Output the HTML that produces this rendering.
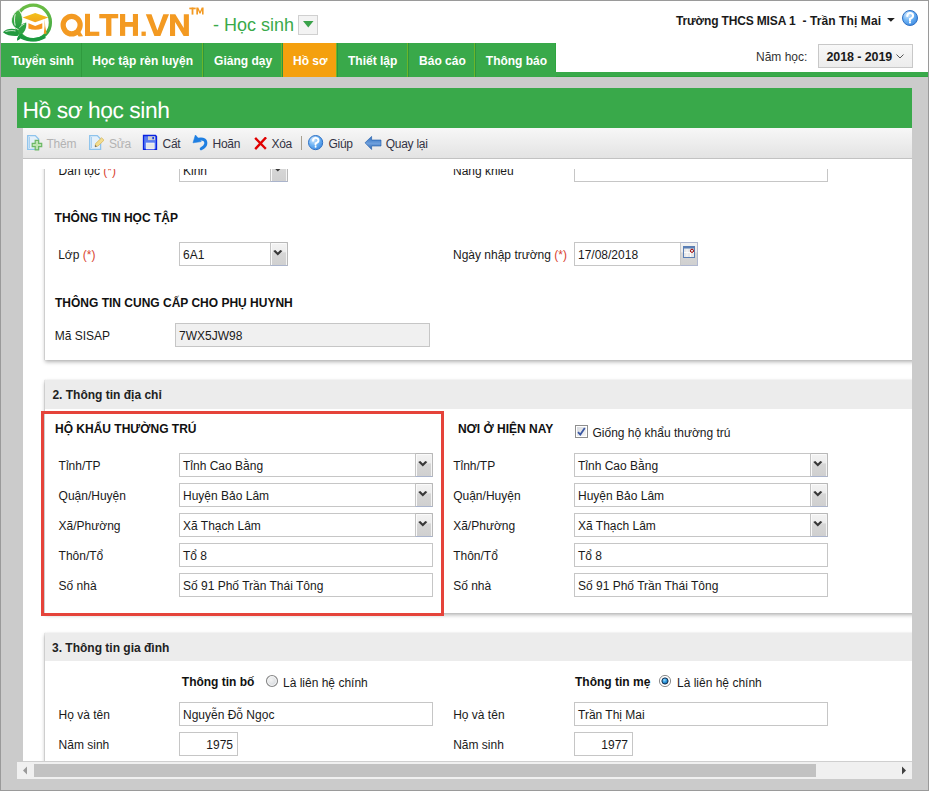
<!DOCTYPE html><html><head><meta charset="utf-8"><style>
html,body{margin:0;padding:0;width:929px;height:791px;overflow:hidden;background:#cbcbcb;}
body{position:relative;font-family:"Liberation Sans", sans-serif;}
.t{position:absolute;white-space:nowrap;line-height:1;}
svg{position:absolute;}
</style></head><body>
<div style="position:absolute;left:0px;top:0px;width:929px;height:791px;box-sizing:border-box;border:1px solid #9a9a9a;background:#cbcbcb"></div>
<div style="position:absolute;left:1px;top:1px;width:927px;height:42px;background:#fff"></div>
<div style="position:absolute;left:1px;top:43px;width:555px;height:34px;background:#39a94a"></div>
<div style="position:absolute;left:556px;top:43px;width:372px;height:29px;background:#fff"></div>
<div style="position:absolute;left:556px;top:72px;width:372px;height:5px;background:#39a94a"></div>
<div style="position:absolute;left:283px;top:43px;width:53px;height:34px;background:#f4a00e"></div>
<div style="position:absolute;left:81px;top:43px;width:1px;height:34px;background:#2f9a3e"></div>
<div style="position:absolute;left:202px;top:43px;width:1px;height:34px;background:#6cb52a"></div>
<div style="position:absolute;left:203px;top:43px;width:1px;height:34px;background:#2e9640"></div>
<div style="position:absolute;left:281px;top:43px;width:1px;height:34px;background:#6cb52a"></div>
<div style="position:absolute;left:282px;top:43px;width:1px;height:34px;background:#2e9640"></div>
<div style="position:absolute;left:336px;top:43px;width:1px;height:34px;background:#6cb52a"></div>
<div style="position:absolute;left:337px;top:43px;width:1px;height:34px;background:#2e9640"></div>
<div style="position:absolute;left:407px;top:43px;width:1px;height:34px;background:#6cb52a"></div>
<div style="position:absolute;left:408px;top:43px;width:1px;height:34px;background:#2e9640"></div>
<div style="position:absolute;left:474px;top:43px;width:1px;height:34px;background:#6cb52a"></div>
<div style="position:absolute;left:475px;top:43px;width:1px;height:34px;background:#2e9640"></div>
<div style="position:absolute;left:555px;top:43px;width:1px;height:29px;background:#2ea63f"></div>
<div style="position:absolute;left:556px;top:76px;width:372px;height:1px;background:#2fa33f"></div>
<div class="t" style="left:11.4px;top:54.64px;font-size:12px;font-weight:bold;color:#ffffff;">Tuyển sinh</div>
<div class="t" style="left:92.3px;top:54.64px;font-size:12px;font-weight:bold;color:#ffffff;">Học tập rèn luyện</div>
<div class="t" style="left:214.1px;top:54.64px;font-size:12px;font-weight:bold;color:#ffffff;">Giảng dạy</div>
<div class="t" style="left:293px;top:54.64px;font-size:12px;font-weight:bold;color:#ffffff;">Hồ sơ</div>
<div class="t" style="left:348px;top:54.64px;font-size:12px;font-weight:bold;color:#ffffff;">Thiết lập</div>
<div class="t" style="left:419.1px;top:54.64px;font-size:12px;font-weight:bold;color:#ffffff;">Báo cáo</div>
<div class="t" style="left:485.8px;top:54.64px;font-size:12px;font-weight:bold;color:#ffffff;">Thông báo</div>
<svg style="left:2px;top:2px" width="52" height="41" viewBox="2 2 52 41">
<defs>
<linearGradient id="capg" x1="0" y1="0" x2="0" y2="1"><stop offset="0" stop-color="#f2c21a"/><stop offset="1" stop-color="#f3a51c"/></linearGradient>
<linearGradient id="leafg" x1="0" y1="0" x2="0" y2="1"><stop offset="0" stop-color="#52b447"/><stop offset="1" stop-color="#1f9a40"/></linearGradient>
<linearGradient id="ringg" x1="0" y1="0" x2="0" y2="1"><stop offset="0" stop-color="#6cbd45"/><stop offset="0.6" stop-color="#4cae45"/><stop offset="1" stop-color="#22a040"/></linearGradient>
</defs>
<circle cx="33.2" cy="22.4" r="17.2" fill="none" stroke="url(#ringg)" stroke-width="3.3"/>
<path d="M22.6 17.4 L35.2 12.9 L48.4 17.4 L35.2 22.3 Z" fill="url(#capg)"/>
<path d="M28.4 23.3 L35.2 26 L42.3 23.3 L42.3 28.5 Q35.2 31 28.4 28.5 Z" fill="#f6961d"/>
<path d="M44.6 18.5 L45.2 26 L46.6 33.8 L43.8 33.8 L44.6 26 Z" fill="#f39a1e"/>
<path d="M18.6 29.5 C10.5 27 8 17 18.3 9.6 C23.8 15 24 24 18.6 29.5 Z" fill="url(#leafg)" stroke="#fff" stroke-width="0.8"/>
<path d="M15.2 14.2 C14.3 18 14.3 22 15.2 25.6" fill="none" stroke="#f4fbf0" stroke-width="0.9"/>
<path d="M18.3 28.8 C19.5 25.5 22 23.5 26.2 22.6 C26.8 27.5 25 32 21.8 34.2 C20 33 18.8 31 18.3 28.8 Z" fill="#2ea244"/>
<path d="M19.5 27.8 C21 25.8 22.8 24.6 24.5 24" fill="none" stroke="#f4fbf0" stroke-width="0.8"/>
<path d="M2.9 32.2 C6 29 11.5 28 16.5 29.5 C18.5 31 19.5 33.5 18.5 35.8 C13 36.5 7 35.5 2.9 32.2 Z" fill="#22993f"/>
<path d="M5.5 31.5 C9 30.5 13 30.3 15.5 31" fill="none" stroke="#f4fbf0" stroke-width="0.8"/>
<path d="M17 40.8 C16.8 37 18.5 34.8 22 34 C21.8 37.5 20.2 39.8 17 40.8 Z" fill="#15953d"/>
<path d="M19.5 35.5 C25 40.5 36 41.8 45 36.5" fill="none" stroke="#1c9a40" stroke-width="3.4"/>
</svg>
<svg style="left:58px;top:10px" width="134" height="30" viewBox="58 10 134 30"><g fill="#f39a22">
<ellipse cx="71.65" cy="25.1" rx="8.5" ry="8.8" fill="none" stroke="#f39a22" stroke-width="5.2"/>
<path d="M74.5 30.5 L78.5 29 L83 36.3 L78.6 36.6 Z"/>
<rect x="85" y="13.8" width="5" height="22.1"/><rect x="85" y="31.7" width="14.3" height="4.2"/>
<rect x="99.3" y="14" width="18.9" height="4.3"/><rect x="106.1" y="14" width="5.3" height="21.9"/>
<rect x="120" y="14" width="5.2" height="21.9"/><rect x="132.9" y="14" width="5.1" height="21.9"/><rect x="120" y="22" width="18" height="4.8"/>
<rect x="141.5" y="31.6" width="4.3" height="4.3"/>
<path d="M145.8 14.2 L151.5 14.2 L157.4 30.6 L163.3 14.2 L169 14.2 L160.4 35.9 L154.4 35.9 Z"/>
<path d="M170 14.2 L175.3 14.2 L183.8 28 L183.8 14.2 L188.9 14.2 L188.9 35.9 L183.6 35.9 L175.1 22 L175.1 35.9 L170 35.9 Z"/>
</g></svg>
<svg style="left:188px;top:6px" width="17" height="10" viewBox="188 6 17 10"><g fill="#f39a22">
<rect x="189.3" y="7.6" width="6.4" height="1.7"/><rect x="191.6" y="7.6" width="1.8" height="7"/>
<path d="M196.3 7.6 H198.3 L200 11.6 L201.7 7.6 H203.6 V14.6 H202 V10.2 L200.6 13.6 H199.4 L198 10.2 V14.6 H196.3 Z"/>
</g></svg>
<div class="t" style="left:213px;top:16.36px;font-size:18px;font-weight:normal;color:#3aaa4a;">- Học sinh</div>
<div style="position:absolute;left:298px;top:15px;width:18px;height:18px;border:1px solid #d0d0d0;background:#f3f3f3"></div>
<svg style="left:303px;top:20.5px" width="11" height="7" viewBox="0 0 11 7"><path d="M0 0 H10.5 L5.25 6.5 Z" fill="#3aa24a"/></svg>
<div class="t" style="left:676px;top:14.74px;font-size:12px;font-weight:bold;color:#1a1a1a;letter-spacing:-0.15px;">Trường THCS MISA 1</div>
<div class="t" style="left:802.4px;top:14.74px;font-size:12px;font-weight:bold;color:#1a1a1a;letter-spacing:0.1px;">- Trần Thị Mai</div>
<svg style="left:887px;top:17.8px" width="8" height="5" viewBox="0 0 8 5"><path d="M0 0 H7.8 L3.9 3.8 Z" fill="#202020"/></svg>
<svg style="left:901px;top:9px" width="18" height="18" viewBox="-9 -9 18 18">
<defs><radialGradient id="hg910" cx="0.35" cy="0.3" r="0.8"><stop offset="0" stop-color="#d4eaff"/><stop offset="0.5" stop-color="#6cb2f4"/><stop offset="1" stop-color="#3a86de"/></radialGradient></defs>
<circle cx="0" cy="0" r="7.5" fill="url(#hg910)" stroke="#2f70c4" stroke-width="1"/>
<path d="M-2.72 -2.0 Q-2.4 -4.96 0 -4.96 Q3.04 -4.96 3.04 -2.24 Q3.04 -0.4 0 0.96 L0 2.4" fill="none" stroke="#fff" stroke-width="2.08" stroke-linecap="round"/>
<circle cx="0" cy="4.4" r="1.04" fill="#fff"/>
</svg>
<div class="t" style="left:756px;top:50.84px;font-size:12px;font-weight:normal;color:#333333;">Năm học:</div>
<div style="position:absolute;left:818px;top:44px;width:93px;height:22px;border:1px solid #c8c8c8;background:linear-gradient(#f8f8f8,#ececec)"></div>
<div class="t" style="left:826.5px;top:51.42px;font-size:12.5px;font-weight:bold;color:#1a1a1a;letter-spacing:-0.1px;">2018 - 2019</div>
<svg style="left:896px;top:54px" width="8" height="5" viewBox="0 0 8 5"><path d="M0.5 0.5 L4 4 L7.5 0.5" fill="none" stroke="#555" stroke-width="1"/></svg>
<div style="position:absolute;left:17px;top:88px;width:895px;height:40px;background:#39a94a"></div>
<div class="t" style="left:22.6px;top:99.10px;font-size:22.8px;font-weight:normal;color:#ffffff;letter-spacing:-0.45px;text-rendering:geometricPrecision;">Hồ sơ học sinh</div>
<div style="position:absolute;left:23px;top:128px;width:889px;height:30px;background:linear-gradient(#f7f7f7,#e3e3e3)"></div>
<div style="position:absolute;left:23px;top:158px;width:889px;height:1px;background:#c2c2c2"></div>
<svg style="left:26px;top:134px" width="17" height="17" viewBox="26 134 17 17">
<path d="M27.7 135.6 H35.3 L38.6 139 V149.3 H27.7 Z" fill="#e4f0fa" stroke="#8ec3ec" stroke-width="1.3"/>
<path d="M29.5 137 V148" stroke="#a8d0f0" stroke-width="1"/>
<path d="M35.2 140.3 H38.6 V143.4 H41.7 V146.7 H38.6 V149.8 H35.2 V146.7 H32.2 V143.4 H35.2 Z" fill="#bfe3b3" stroke="#6cb865" stroke-width="1.2"/>
</svg>
<div class="t" style="left:46.5px;top:138.14px;font-size:12px;font-weight:normal;color:#b3b3b3;letter-spacing:-0.25px;">Thêm</div>
<svg style="left:88px;top:134px" width="17" height="17" viewBox="88 134 17 17">
<path d="M89.7 135.6 H97.3 L100.6 139 V149.3 H89.7 Z" fill="#e4f0fa" stroke="#8ec3ec" stroke-width="1.3"/>
<path d="M91.5 137 V148" stroke="#a8d0f0" stroke-width="1"/>
<path d="M95 146.8 L95.6 143.6 L101.6 137.8 L104 140.2 L98 146 Z" fill="#f2dc8e" stroke="#d9b95e" stroke-width="0.8"/>
<path d="M95 146.8 L95.4 145 L96.8 146.4 Z" fill="#404060"/>
</svg>
<div class="t" style="left:109px;top:138.14px;font-size:12px;font-weight:normal;color:#b3b3b3;letter-spacing:-0.25px;">Sửa</div>
<svg style="left:142px;top:134px" width="17" height="17" viewBox="142 134 17 17">
<path d="M143.5 135.5 H155.5 L156.5 136.5 V149.3 H143.5 Z" fill="#5a7cf0" stroke="#0a22e0" stroke-width="1.3"/>
<rect x="148" y="136.3" width="7" height="3.8" fill="#cfcfcf"/>
<rect x="152.3" y="137" width="1.7" height="2.2" fill="#2040e0"/>
<rect x="146.2" y="143" width="8" height="6" fill="#e6e6e6" stroke="#fff" stroke-width="0.6"/>
</svg>
<div class="t" style="left:162.5px;top:138.14px;font-size:12px;font-weight:normal;color:#333344;letter-spacing:-0.25px;">Cất</div>
<svg style="left:191px;top:134px" width="18" height="17" viewBox="191 134 18 17">
<path d="M198.5 139.2 C203.5 138 206.2 140.5 205.8 143.8 C205.5 146 203.5 147.5 201.2 148.8" fill="none" stroke="#1f7fe2" stroke-width="3" stroke-linecap="round"/>
<path d="M195.4 135 L193 142.8 L201.2 141.6 Z" fill="#1f7fe2" stroke="#1f7fe2" stroke-width="0.6" stroke-linejoin="round"/>
</svg>
<div class="t" style="left:212.5px;top:138.14px;font-size:12px;font-weight:normal;color:#333344;letter-spacing:-0.25px;">Hoãn</div>
<svg style="left:254px;top:137px" width="13" height="13" viewBox="254 137 13 13">
<path d="M256 138.8 L265 148 M265.3 138.2 L256 148.2" stroke="#e00000" stroke-width="2.4" stroke-linecap="square"/>
</svg>
<div class="t" style="left:271.4px;top:138.14px;font-size:12px;font-weight:normal;color:#333344;letter-spacing:-0.25px;">Xóa</div>
<div style="position:absolute;left:301px;top:136px;width:1px;height:14px;background:#a8a090"></div>
<svg style="left:306.9px;top:133.8px" width="17.2" height="17.2" viewBox="-8.6 -8.6 17.2 17.2">
<defs><radialGradient id="hg315" cx="0.35" cy="0.3" r="0.8"><stop offset="0" stop-color="#d4eaff"/><stop offset="0.5" stop-color="#6cb2f4"/><stop offset="1" stop-color="#3a86de"/></radialGradient></defs>
<circle cx="0" cy="0" r="7.1" fill="url(#hg315)" stroke="#2f70c4" stroke-width="1"/>
<path d="M-2.584 -1.9 Q-2.28 -4.712 0 -4.712 Q2.888 -4.712 2.888 -2.128 Q2.888 -0.38 0 0.9119999999999999 L0 2.28" fill="none" stroke="#fff" stroke-width="1.976" stroke-linecap="round"/>
<circle cx="0" cy="4.18" r="0.988" fill="#fff"/>
</svg>
<div class="t" style="left:328.4px;top:138.14px;font-size:12px;font-weight:normal;color:#333344;letter-spacing:-0.25px;">Giúp</div>
<svg style="left:364px;top:136px" width="18" height="14" viewBox="364 136 18 14">
<defs><linearGradient id="arg" x1="0" y1="0" x2="0" y2="1"><stop offset="0" stop-color="#2a6cc0"/><stop offset="0.55" stop-color="#6fa0dc"/><stop offset="1" stop-color="#2a64b0"/></linearGradient></defs>
<path d="M365 142.8 L371.6 136.4 V140 H381 V146 H371.6 V149.5 Z" fill="url(#arg)" stroke="#1f5aa8" stroke-width="0.6"/>
</svg>
<div class="t" style="left:385.7px;top:138.14px;font-size:12px;font-weight:normal;color:#333344;letter-spacing:-0.25px;">Quay lại</div>
<div style="position:absolute;left:23px;top:159px;width:889px;height:602px;background:#fff"></div>
<div style="position:absolute;left:23px;top:169px;width:889px;height:592px;overflow:hidden">
<div style="position:absolute;left:22px;top:-69px;width:900px;height:260px;background:#fff;box-shadow:-1.5px 0 1px rgba(0,0,0,0.16), 0 2px 4px rgba(0,0,0,0.3)"></div>
<div class="t" style="left:35.6px;top:-4.16px;font-size:12px;font-weight:normal;color:#1a1a1a;">Dân tộc <span style="color:#d9432f">(*)</span></div>
<div style="position:absolute;left:156px;top:-11px;width:107px;height:22px;border:1px solid #c6c6c6;background:#fff"></div>
<div style="position:absolute;left:247px;top:-11px;width:16px;height:22px;border:1px solid #b8b8b8;border-left-color:#c4c4c4;border-bottom-color:#aab4cc;border-top-right-radius:2px;background:linear-gradient(#f3f3f3 0,#ececec 40%,#d6d6d6 45%,#d0d0d0 100%);box-shadow:inset 1px 1px 0 #fafafa, inset -1px 0 0 #f4f4f4"></div>
<svg style="position:absolute;left:249.8px;top:-3.4px" width="11" height="8" viewBox="0 0 11 8"><path d="M0.2 1.0 L4.8 5.5 L9.4 1.0 L7.3 0.1 L4.8 2.6 L2.3 0.1 Z" fill="#383838"/></svg>
<div class="t" style="left:160px;top:-4.16px;font-size:12px;font-weight:normal;color:#1a1a1a;">Kinh</div>
<div class="t" style="left:430px;top:-4.16px;font-size:12px;font-weight:normal;color:#1a1a1a;">Năng khiếu</div>
<div style="position:absolute;left:551px;top:-11px;width:252px;height:22px;border:1px solid #c6c6c6;background:#fff"></div>
<div class="t" style="left:31.6px;top:43.24px;font-size:12px;font-weight:bold;color:#111;">THÔNG TIN HỌC TẬP</div>
<div class="t" style="left:35.2px;top:80.44px;font-size:12px;font-weight:normal;color:#1a1a1a;">Lớp <span style="color:#d9432f">(*)</span></div>
<div style="position:absolute;left:156px;top:73px;width:107px;height:22px;border:1px solid #c6c6c6;background:#fff"></div>
<div style="position:absolute;left:247px;top:73px;width:16px;height:22px;border:1px solid #b8b8b8;border-left-color:#c4c4c4;border-bottom-color:#aab4cc;border-top-right-radius:2px;background:linear-gradient(#f3f3f3 0,#ececec 40%,#d6d6d6 45%,#d0d0d0 100%);box-shadow:inset 1px 1px 0 #fafafa, inset -1px 0 0 #f4f4f4"></div>
<svg style="position:absolute;left:249.8px;top:80.6px" width="11" height="8" viewBox="0 0 11 8"><path d="M0.2 1.0 L4.8 5.5 L9.4 1.0 L7.3 0.1 L4.8 2.6 L2.3 0.1 Z" fill="#383838"/></svg>
<div class="t" style="left:160px;top:79.84px;font-size:12px;font-weight:normal;color:#1a1a1a;">6A1</div>
<div class="t" style="left:430px;top:80.44px;font-size:12px;font-weight:normal;color:#1a1a1a;">Ngày nhập trường <span style="color:#d9432f">(*)</span></div>
<div style="position:absolute;left:551px;top:73px;width:122px;height:22px;border:1px solid #c6c6c6;background:#fff"></div>
<div class="t" style="left:555px;top:79.84px;font-size:12px;font-weight:normal;color:#1a1a1a;">17/08/2018</div>
<div style="position:absolute;left:657px;top:73px;width:16px;height:22px;border:1px solid #b0b8d0;border-left-color:#c8c8c8;background:linear-gradient(#f3f3f3 0,#ececec 40%,#d6d6d6 45%,#d0d0d0 100%)"></div>
<svg style="left:660px;top:77px" width="12" height="12" viewBox="0 0 12 12">
<rect x="0.5" y="0.5" width="11" height="11" fill="#e8e8e8" stroke="#5b7fb5" stroke-width="1"/>
<rect x="0.5" y="0.5" width="11" height="2" fill="#5b7fb5"/>
<path d="M4 3 V11 M7.5 3 V11 M1 6.5 H11" stroke="#fff" stroke-width="0.8"/>
<circle cx="9" cy="4.8" r="1.6" fill="none" stroke="#a00000" stroke-width="1"/>
</svg>
<div class="t" style="left:32px;top:128.24px;font-size:12px;font-weight:bold;color:#111;">THÔNG TIN CUNG CẤP CHO PHỤ HUYNH</div>
<div class="t" style="left:31.700000000000003px;top:160.54px;font-size:12px;font-weight:normal;color:#1a1a1a;">Mã SISAP</div>
<div style="position:absolute;left:152px;top:154px;width:253px;height:22px;border:1px solid #c6c6c6;background:#f0f0f0"></div>
<div class="t" style="left:156px;top:160.84px;font-size:12px;font-weight:normal;color:#1a1a1a;">7WX5JW98</div>
<div style="position:absolute;left:22px;top:211px;width:900px;height:233px;background:#fff;box-shadow:-1.5px 0 1px rgba(0,0,0,0.16), 0 2px 4px rgba(0,0,0,0.3)"></div>
<div style="position:absolute;left:22px;top:211px;width:900px;height:29px;background:#ececec"></div>
<div class="t" style="left:29.4px;top:219.84px;font-size:12px;font-weight:bold;color:#222;">2. Thông tin địa chỉ</div>
<div style="position:absolute;left:18px;top:242px;width:397px;height:199px;border:3px solid #e5433a"></div>
<div class="t" style="left:32px;top:253.74px;font-size:12px;font-weight:bold;color:#111;">HỘ KHẨU THƯỜNG TRÚ</div>
<div class="t" style="left:434.9px;top:253.84px;font-size:12px;font-weight:bold;color:#111;">NƠI Ở HIỆN NAY</div>
<svg style="left:552px;top:256px" width="13" height="13" viewBox="0 0 13 13">
<defs><linearGradient id="cbg" x1="0" y1="0" x2="1" y2="1"><stop offset="0" stop-color="#d8dbe0"/><stop offset="1" stop-color="#f6f6f6"/></linearGradient></defs>
<rect x="0.5" y="0.5" width="12" height="12" fill="#fff" stroke="#8e8e8e"/>
<rect x="2" y="2" width="9" height="9" fill="url(#cbg)"/>
<path d="M3 7.2 L5.3 9.6 L9.8 3" fill="none" stroke="#3b58a3" stroke-width="1.8"/>
</svg>
<div class="t" style="left:569.5px;top:257.64px;font-size:12px;font-weight:normal;color:#1a1a1a;">Giống hộ khẩu thường trú</div>
<div class="t" style="left:35.6px;top:291.04px;font-size:12px;font-weight:normal;color:#1a1a1a;">Tỉnh/TP</div>
<div style="position:absolute;left:156px;top:284px;width:252px;height:22px;border:1px solid #c6c6c6;background:#fff"></div>
<div style="position:absolute;left:392px;top:284px;width:16px;height:22px;border:1px solid #b8b8b8;border-left-color:#c4c4c4;border-bottom-color:#aab4cc;border-top-right-radius:2px;background:linear-gradient(#f3f3f3 0,#ececec 40%,#d6d6d6 45%,#d0d0d0 100%);box-shadow:inset 1px 1px 0 #fafafa, inset -1px 0 0 #f4f4f4"></div>
<svg style="position:absolute;left:394.8px;top:291.6px" width="11" height="8" viewBox="0 0 11 8"><path d="M0.2 1.0 L4.8 5.5 L9.4 1.0 L7.3 0.1 L4.8 2.6 L2.3 0.1 Z" fill="#383838"/></svg>
<div class="t" style="left:160px;top:290.84px;font-size:12px;font-weight:normal;color:#1a1a1a;">Tỉnh Cao Bằng</div>
<div class="t" style="left:430.2px;top:291.04px;font-size:12px;font-weight:normal;color:#1a1a1a;">Tỉnh/TP</div>
<div style="position:absolute;left:551px;top:284px;width:252px;height:22px;border:1px solid #c6c6c6;background:#fff"></div>
<div style="position:absolute;left:787px;top:284px;width:16px;height:22px;border:1px solid #b8b8b8;border-left-color:#c4c4c4;border-bottom-color:#aab4cc;border-top-right-radius:2px;background:linear-gradient(#f3f3f3 0,#ececec 40%,#d6d6d6 45%,#d0d0d0 100%);box-shadow:inset 1px 1px 0 #fafafa, inset -1px 0 0 #f4f4f4"></div>
<svg style="position:absolute;left:789.8px;top:291.6px" width="11" height="8" viewBox="0 0 11 8"><path d="M0.2 1.0 L4.8 5.5 L9.4 1.0 L7.3 0.1 L4.8 2.6 L2.3 0.1 Z" fill="#383838"/></svg>
<div class="t" style="left:555px;top:290.84px;font-size:12px;font-weight:normal;color:#1a1a1a;">Tỉnh Cao Bằng</div>
<div class="t" style="left:35.6px;top:321.04px;font-size:12px;font-weight:normal;color:#1a1a1a;">Quận/Huyện</div>
<div style="position:absolute;left:156px;top:314px;width:252px;height:22px;border:1px solid #c6c6c6;background:#fff"></div>
<div style="position:absolute;left:392px;top:314px;width:16px;height:22px;border:1px solid #b8b8b8;border-left-color:#c4c4c4;border-bottom-color:#aab4cc;border-top-right-radius:2px;background:linear-gradient(#f3f3f3 0,#ececec 40%,#d6d6d6 45%,#d0d0d0 100%);box-shadow:inset 1px 1px 0 #fafafa, inset -1px 0 0 #f4f4f4"></div>
<svg style="position:absolute;left:394.8px;top:321.6px" width="11" height="8" viewBox="0 0 11 8"><path d="M0.2 1.0 L4.8 5.5 L9.4 1.0 L7.3 0.1 L4.8 2.6 L2.3 0.1 Z" fill="#383838"/></svg>
<div class="t" style="left:160px;top:320.84px;font-size:12px;font-weight:normal;color:#1a1a1a;">Huyện Bảo Lâm</div>
<div class="t" style="left:430.2px;top:321.04px;font-size:12px;font-weight:normal;color:#1a1a1a;">Quận/Huyện</div>
<div style="position:absolute;left:551px;top:314px;width:252px;height:22px;border:1px solid #c6c6c6;background:#fff"></div>
<div style="position:absolute;left:787px;top:314px;width:16px;height:22px;border:1px solid #b8b8b8;border-left-color:#c4c4c4;border-bottom-color:#aab4cc;border-top-right-radius:2px;background:linear-gradient(#f3f3f3 0,#ececec 40%,#d6d6d6 45%,#d0d0d0 100%);box-shadow:inset 1px 1px 0 #fafafa, inset -1px 0 0 #f4f4f4"></div>
<svg style="position:absolute;left:789.8px;top:321.6px" width="11" height="8" viewBox="0 0 11 8"><path d="M0.2 1.0 L4.8 5.5 L9.4 1.0 L7.3 0.1 L4.8 2.6 L2.3 0.1 Z" fill="#383838"/></svg>
<div class="t" style="left:555px;top:320.84px;font-size:12px;font-weight:normal;color:#1a1a1a;">Huyện Bảo Lâm</div>
<div class="t" style="left:35.6px;top:351.04px;font-size:12px;font-weight:normal;color:#1a1a1a;">Xã/Phường</div>
<div style="position:absolute;left:156px;top:344px;width:252px;height:22px;border:1px solid #c6c6c6;background:#fff"></div>
<div style="position:absolute;left:392px;top:344px;width:16px;height:22px;border:1px solid #b8b8b8;border-left-color:#c4c4c4;border-bottom-color:#aab4cc;border-top-right-radius:2px;background:linear-gradient(#f3f3f3 0,#ececec 40%,#d6d6d6 45%,#d0d0d0 100%);box-shadow:inset 1px 1px 0 #fafafa, inset -1px 0 0 #f4f4f4"></div>
<svg style="position:absolute;left:394.8px;top:351.6px" width="11" height="8" viewBox="0 0 11 8"><path d="M0.2 1.0 L4.8 5.5 L9.4 1.0 L7.3 0.1 L4.8 2.6 L2.3 0.1 Z" fill="#383838"/></svg>
<div class="t" style="left:160px;top:350.84px;font-size:12px;font-weight:normal;color:#1a1a1a;">Xã Thạch Lâm</div>
<div class="t" style="left:430.2px;top:351.04px;font-size:12px;font-weight:normal;color:#1a1a1a;">Xã/Phường</div>
<div style="position:absolute;left:551px;top:344px;width:252px;height:22px;border:1px solid #c6c6c6;background:#fff"></div>
<div style="position:absolute;left:787px;top:344px;width:16px;height:22px;border:1px solid #b8b8b8;border-left-color:#c4c4c4;border-bottom-color:#aab4cc;border-top-right-radius:2px;background:linear-gradient(#f3f3f3 0,#ececec 40%,#d6d6d6 45%,#d0d0d0 100%);box-shadow:inset 1px 1px 0 #fafafa, inset -1px 0 0 #f4f4f4"></div>
<svg style="position:absolute;left:789.8px;top:351.6px" width="11" height="8" viewBox="0 0 11 8"><path d="M0.2 1.0 L4.8 5.5 L9.4 1.0 L7.3 0.1 L4.8 2.6 L2.3 0.1 Z" fill="#383838"/></svg>
<div class="t" style="left:555px;top:350.84px;font-size:12px;font-weight:normal;color:#1a1a1a;">Xã Thạch Lâm</div>
<div class="t" style="left:35.6px;top:381.04px;font-size:12px;font-weight:normal;color:#1a1a1a;">Thôn/Tổ</div>
<div style="position:absolute;left:156px;top:374px;width:252px;height:22px;border:1px solid #c6c6c6;background:#fff"></div>
<div class="t" style="left:160px;top:380.84px;font-size:12px;font-weight:normal;color:#1a1a1a;">Tổ 8</div>
<div class="t" style="left:430.2px;top:381.04px;font-size:12px;font-weight:normal;color:#1a1a1a;">Thôn/Tổ</div>
<div style="position:absolute;left:551px;top:374px;width:252px;height:22px;border:1px solid #c6c6c6;background:#fff"></div>
<div class="t" style="left:555px;top:380.84px;font-size:12px;font-weight:normal;color:#1a1a1a;">Tổ 8</div>
<div class="t" style="left:35.6px;top:411.04px;font-size:12px;font-weight:normal;color:#1a1a1a;">Số nhà</div>
<div style="position:absolute;left:156px;top:404px;width:252px;height:22px;border:1px solid #c6c6c6;background:#fff"></div>
<div class="t" style="left:160px;top:410.84px;font-size:12px;font-weight:normal;color:#1a1a1a;">Số 91 Phố Trần Thái Tông</div>
<div class="t" style="left:430.2px;top:411.04px;font-size:12px;font-weight:normal;color:#1a1a1a;">Số nhà</div>
<div style="position:absolute;left:551px;top:404px;width:252px;height:22px;border:1px solid #c6c6c6;background:#fff"></div>
<div class="t" style="left:555px;top:410.84px;font-size:12px;font-weight:normal;color:#1a1a1a;">Số 91 Phố Trần Thái Tông</div>
<div style="position:absolute;left:22px;top:464px;width:900px;height:200px;background:#fff;box-shadow:-1.5px 0 1px rgba(0,0,0,0.16), 0 2px 4px rgba(0,0,0,0.3)"></div>
<div style="position:absolute;left:22px;top:464px;width:900px;height:28px;background:#ececec"></div>
<div class="t" style="left:29px;top:472.64px;font-size:12px;font-weight:bold;color:#222;">3. Thông tin gia đình</div>
<div class="t" style="left:158.8px;top:507.34px;font-size:12px;font-weight:bold;color:#111;">Thông tin bố</div>
<svg style="left:242px;top:505px" width="14" height="14" viewBox="0 0 14 14">
<defs><radialGradient id="rg1" cx="0.4" cy="0.4" r="0.7"><stop offset="0" stop-color="#f4f4f4"/><stop offset="1" stop-color="#cfd3d8"/></radialGradient></defs>
<circle cx="7" cy="7" r="5.5" fill="url(#rg1)" stroke="#8a8a8a" stroke-width="1.2"/>
<circle cx="7" cy="7" r="4.3" fill="none" stroke="#f8f8f8" stroke-width="0.9"/>
</svg>
<div class="t" style="left:260px;top:507.84px;font-size:12px;font-weight:normal;color:#1a1a1a;">Là liên hệ chính</div>
<div class="t" style="left:552px;top:507.34px;font-size:12px;font-weight:bold;color:#111;">Thông tin mẹ</div>
<svg style="left:635px;top:505px" width="14" height="14" viewBox="0 0 14 14">
<defs><radialGradient id="rg2" cx="0.4" cy="0.35" r="0.7"><stop offset="0" stop-color="#9fdcff"/><stop offset="0.5" stop-color="#2a9ae0"/><stop offset="1" stop-color="#1a5a90"/></radialGradient></defs>
<circle cx="7" cy="7" r="5.6" fill="#fff" stroke="#8a8a8a" stroke-width="1"/>
<circle cx="7" cy="7" r="3.1" fill="url(#rg2)" stroke="#15304f" stroke-width="1"/>
</svg>
<div class="t" style="left:654px;top:507.84px;font-size:12px;font-weight:normal;color:#1a1a1a;">Là liên hệ chính</div>
<div class="t" style="left:35.6px;top:540.34px;font-size:12px;font-weight:normal;color:#1a1a1a;">Họ và tên</div>
<div style="position:absolute;left:156px;top:533px;width:252px;height:22px;border:1px solid #c6c6c6;background:#fff"></div>
<div class="t" style="left:160px;top:539.84px;font-size:12px;font-weight:normal;color:#1a1a1a;">Nguyễn Đỗ Ngọc</div>
<div class="t" style="left:430.2px;top:540.34px;font-size:12px;font-weight:normal;color:#1a1a1a;">Họ và tên</div>
<div style="position:absolute;left:551px;top:533px;width:252px;height:22px;border:1px solid #c6c6c6;background:#fff"></div>
<div class="t" style="left:555px;top:539.84px;font-size:12px;font-weight:normal;color:#1a1a1a;">Trần Thị Mai</div>
<div class="t" style="left:35.6px;top:570.34px;font-size:12px;font-weight:normal;color:#1a1a1a;">Năm sinh</div>
<div style="position:absolute;left:156px;top:563px;width:57px;height:22px;border:1px solid #c6c6c6;background:#fff"></div>
<div class="t" style="left:156px;top:569.84px;font-size:12px;font-weight:normal;color:#1a1a1a;width:54px;text-align:right;">1975</div>
<div class="t" style="left:430.2px;top:570.34px;font-size:12px;font-weight:normal;color:#1a1a1a;">Năm sinh</div>
<div style="position:absolute;left:551px;top:563px;width:57px;height:22px;border:1px solid #c6c6c6;background:#fff"></div>
<div class="t" style="left:551px;top:569.84px;font-size:12px;font-weight:normal;color:#1a1a1a;width:54px;text-align:right;">1977</div>
</div>
<div style="position:absolute;left:23px;top:761px;width:889px;height:1px;background:#cfcfcf"></div>
<div style="position:absolute;left:17px;top:762px;width:895px;height:17px;background:#f0f0f0"></div>
<div style="position:absolute;left:34px;top:764px;width:782px;height:13px;background:#c2c2c2"></div>
<svg style="left:22px;top:766px" width="6" height="9" viewBox="0 0 6 9"><path d="M5 0.5 V8.5 L1 4.5 Z" fill="#9a9a9a"/></svg>
<svg style="left:901px;top:766px" width="6" height="9" viewBox="0 0 6 9"><path d="M1 0.5 V8.5 L5 4.5 Z" fill="#404040"/></svg>
</body></html>
